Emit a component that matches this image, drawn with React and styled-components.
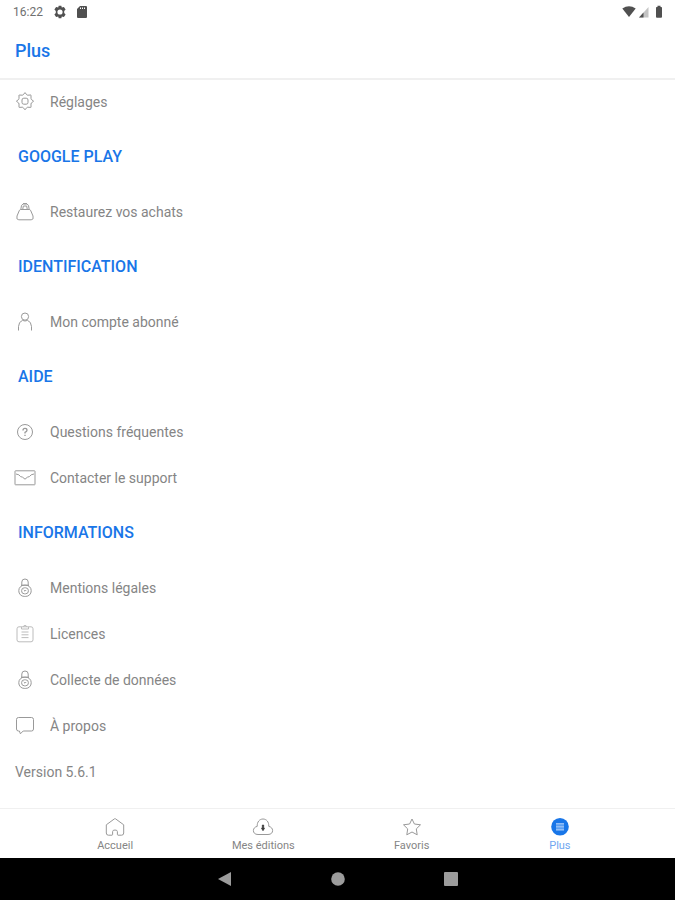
import { useState } from "react";
import styled, { createGlobalStyle } from "styled-components";

const SECTIONS = [
  { rows: [{ icon: "gear", label: "Réglages" }] },
  { title: "GOOGLE PLAY", rows: [{ icon: "bag", label: "Restaurez vos achats" }] },
  { title: "IDENTIFICATION", rows: [{ icon: "user", label: "Mon compte abonné" }] },
  {
    title: "AIDE",
    rows: [
      { icon: "help", label: "Questions fréquentes" },
      { icon: "mail", label: "Contacter le support" },
    ],
  },
  {
    title: "INFORMATIONS",
    rows: [
      { icon: "lock", label: "Mentions légales" },
      { icon: "licence", label: "Licences" },
      { icon: "lock", label: "Collecte de données" },
      { icon: "bubble", label: "À propos" },
    ],
  },
];

const TABS = [
  { icon: "home", label: "Accueil" },
  { icon: "cloud", label: "Mes éditions" },
  { icon: "star", label: "Favoris" },
  { icon: "plus", label: "Plus" },
];

const ICONS = {
  gear: (
    <>
      <path d="M9.2 3.8 L11 1.6 L12.8 3.8 L13.6 4.2 L16.8 4 L17 4.2 L17 7.4 L17.3 8.4 L19.6 10.2 L17.3 12 L17 13 L17 16.2 L16.8 16.4 L13.6 16.2 L12.8 16.6 L11 18.8 L9.2 16.6 L8.4 16.2 L5.2 16.4 L5 16.2 L5 13 L4.7 12 L2.4 10.2 L4.7 8.4 L5 7.4 L5 4.2 L5.2 4 L8.4 4.2 Z" />
      <rect x="8" y="7.2" width="6" height="6" rx="1.8" />
    </>
  ),
  bag: (
    <>
      <path d="M6.6 8.5 H15.4 Q16.2 8.5 16.8 9.8 L19 15 Q20 18.8 17.2 18.8 H4.8 Q2 18.8 3 15 L5.2 9.8 Q5.8 8.5 6.6 8.5 Z" />
      <path d="M6.8 8.5 Q7 3 9.2 3 H12.8 Q15 3 15.2 8.5 M8.8 8 L9.3 5 H12.7 L13.2 8 M9 2.6 H13" />
    </>
  ),
  user: (
    <>
      <circle cx="11" cy="5.6" r="3.6" />
      <path d="M4.5 19.5 V15.5 Q4.8 10.6 8.5 9.4 Q11 10.6 13.5 9.4 Q17.2 10.6 17.5 15.5 V19.5" />
    </>
  ),
  help: (
    <>
      <circle cx="11" cy="11" r="7.5" />
      <path d="M9 9.4 Q9 7.4 11 7.4 T13 9.2 Q13 10.3 11 11.4 V12.6 M11 13.8 V15" strokeWidth="1.3" />
    </>
  ),
  mail: (
    <>
      <rect x="1" y="3.8" width="20" height="14" rx="0.5" />
      <path d="M2 7 L4.8 7.8 L6.6 9.6 L8.6 10.2 L11 12.2 L13.4 10.2 L15.4 9.6 L17.2 7.8 L20 7" />
    </>
  ),
  lock: (
    <>
      <path d="M7.8 9 V5 Q7.8 2 11 2 T14.2 5 V9" />
      <rect x="4.8" y="8.2" width="12.4" height="11.2" rx="5.4" />
      <path d="M7 8.2 H15" />
      <rect x="7.6" y="10.8" width="6.8" height="6" rx="2.8" />
      <path d="M9.8 13 L11 14.2 L12.2 13" />
    </>
  ),
  licence: (
    <>
      <rect x="3" y="3.8" width="16" height="15" rx="2" />
      <path d="M7.5 4 V6 H14.5 V4 M9.5 4 L10 2.6 H12 L12.5 4 M7.5 9 H14.5 M7.5 11.8 H14.5 M7.5 14.6 H14.5" />
    </>
  ),
  bubble: (
    <path d="M4.5 2.5 H17.5 Q19.5 2.5 19.5 4.5 V14 Q19.5 16 17.5 16 H9.2 L6.4 18.8 L5.4 16 H4.5 Q2.5 16 2.5 14 V4.5 Q2.5 2.5 4.5 2.5 Z" />
  ),
  home: (
    <path d="M11.5 2.8 Q11 2.4 10.5 2.8 L2.3 8.8 V17 Q2.3 19.2 4.4 19.2 H8 Q8.6 19.2 8.6 18.4 V15.6 Q8.6 14 11 14 T13.4 15.6 V18.4 Q13.4 19.2 14 19.2 H17.6 Q19.7 19.2 19.7 17 V8.8 Z" />
  ),
  cloud: (
    <>
      <path d="M6 18.5 C2.8 18.5 1.4 16.6 1.4 14.6 C1.4 12.4 3 10.8 5.2 10.4 C5 5.8 7.6 3 11 3 S17 5.8 16.8 10.4 C19 10.8 20.6 12.4 20.6 14.6 C20.6 16.6 19.2 18.5 16 18.5 Z" />
      <path d="M10.3 9 H11.7 V12.2 H12.6 L11 14.8 L9.4 12.2 H10.3 Z" fill="#333" stroke="#333" strokeWidth="0.6" />
    </>
  ),
  star: (
    <path d="M11 3 L13.4 8 L19.5 8.8 L15.3 12.9 L16.2 18.8 L11 16 L5.8 18.8 L6.7 12.9 L2.5 8.8 L8.6 8 Z" />
  ),
  plus: (
    <>
      <circle cx="11" cy="10.8" r="8.8" fill="#1976e8" stroke="none" />
      <rect x="7" y="7" width="8" height="7.6" fill="#5b9ff2" stroke="none" />
      <path d="M7 7.8 H15 M7 10.8 H15 M7 13.8 H15" stroke="#a9cbf8" />
    </>
  ),
};

const Icon = ({ name }) => (
  <IconSvg viewBox="0 0 22 22" $light={name === "licence"} aria-hidden="true">
    {ICONS[name]}
  </IconSvg>
);

const App = () => {
  const [activeTab, setActiveTab] = useState("Plus");

  return (
    <Page>
      <GlobalStyle />
      <StatusBar>
        <StatusGroup>
          <Time>16:22</Time>
          <StatusIcon viewBox="0 0 14 14">
            <path
              d="M5.7 0.8 H8.3 L8.8 2.6 L10.9 2 L12.6 4.6 L11.2 6 V8 L12.6 9.4 L10.9 12 L8.8 11.4 L8.3 13.2 H5.7 L5.2 11.4 L3.1 12 L1.4 9.4 L2.8 8 V6 L1.4 4.6 L3.1 2 L5.2 2.6 Z M7 4.4 A2.6 2.6 0 1 0 7 9.6 A2.6 2.6 0 1 0 7 4.4 Z"
              fillRule="evenodd"
            />
          </StatusIcon>
          <StatusIcon viewBox="0 0 14 14">
            <path
              d="M5 1 H11 Q12 1 12 2 V12 Q12 13 11 13 H3 Q2 13 2 12 V4 Z M5 2.5 V4 H6 V2.5 Z M7 2.5 V4 H8 V2.5 Z M9 2.5 V4 H10 V2.5 Z"
              fillRule="evenodd"
            />
          </StatusIcon>
        </StatusGroup>
        <StatusGroup $tight>
          <StatusIcon viewBox="0 0 14 14">
            <path d="M0.3 3.6 Q7 -1 13.7 3.6 L7 12 Z" />
          </StatusIcon>
          <StatusIcon viewBox="0 0 14 14">
            <path d="M11.5 2 V12.5 H2 Z" fill="#c4c4c4" />
            <path d="M6.5 7.5 V12.5 H2 Z" />
          </StatusIcon>
          <StatusIcon viewBox="0 0 14 14">
            <path d="M5.5 0.8 H8.5 V2 H9.2 Q10 2 10 2.8 V12 Q10 12.8 9 12.8 H5 Q4 12.8 4 12 V2.8 Q4 2 4.8 2 H5.5 Z" />
          </StatusIcon>
        </StatusGroup>
      </StatusBar>

      <Header>
        <Title>Plus</Title>
      </Header>

      <Content>
        {SECTIONS.map(({ title, rows }) => (
          <section key={title || "general"}>
            {title && <SectionTitle>{title}</SectionTitle>}
            {rows.map(({ icon, label }) => (
              <Row key={label} type="button">
                <Icon name={icon} />
                {label}
              </Row>
            ))}
          </section>
        ))}
        <Version>Version 5.6.1</Version>
      </Content>

      <TabBar>
        {TABS.map(({ icon, label }) => (
          <Tab
            key={label}
            type="button"
            $active={label === activeTab}
            onClick={() => setActiveTab(label)}
          >
            <Icon name={icon} />
            {label}
          </Tab>
        ))}
      </TabBar>

      <SystemBar>
        <SystemButton type="button" aria-label="Retour">
          <SystemIcon viewBox="0 0 16 16">
            <path d="M14 1 V15 L1 8 Z" />
          </SystemIcon>
        </SystemButton>
        <SystemButton type="button" aria-label="Accueil du système">
          <SystemIcon viewBox="0 0 16 16">
            <circle cx="8" cy="8" r="6.8" />
          </SystemIcon>
        </SystemButton>
        <SystemButton type="button" aria-label="Applications récentes">
          <SystemIcon viewBox="0 0 16 16">
            <rect x="1" y="1" width="14" height="14" rx="1" />
          </SystemIcon>
        </SystemButton>
      </SystemBar>
    </Page>
  );
};

const GlobalStyle = createGlobalStyle`
  * {
    box-sizing: border-box;
  }
  body {
    margin: 0;
    background: #fff;
    color: #858585;
    font-family: Roboto, sans-serif;
  }
  button {
    border: none;
    padding: 0;
    background: none;
    color: inherit;
    font-family: inherit;
    cursor: pointer;
  }
`;

const Page = styled.div`
  display: flex;
  flex-direction: column;
  min-height: 100vh;
`;

const StatusBar = styled.div`
  display: flex;
  justify-content: space-between;
  align-items: center;
  height: 23px;
  padding: 0 9px 0 13px;
`;
const StatusGroup = styled.div`
  display: flex;
  align-items: center;
  gap: ${({ $tight }) => ($tight ? "1px" : "8px")};
`;
const Time = styled.span`
  min-width: 32px;
  font-size: 12px;
  color: #707070;
`;
const StatusIcon = styled.svg`
  width: 14px;
  height: 14px;
  fill: #505050;
`;

const Header = styled.header`
  display: flex;
  align-items: center;
  height: 55px;
  padding: 0 15px;
  box-shadow: 0 2px #f0f0f0;
`;
const Title = styled.h1`
  margin: 0;
  font-size: 18px;
  font-weight: 500;
  color: #1976e8;
`;

const Content = styled.main`
  flex: 1;
  padding-top: 1px;
`;
const SectionTitle = styled.h2`
  margin: 0;
  padding: 0 18px;
  font-size: 16px;
  line-height: 64px;
  font-weight: 500;
  color: #1976e8;
`;
const Row = styled.button`
  display: flex;
  align-items: center;
  gap: 14px;
  width: 100%;
  height: 46px;
  padding: 0 14px;
  font-size: 14px;
  text-align: left;
`;
const IconSvg = styled.svg`
  width: 22px;
  height: 22px;
  fill: none;
  stroke: ${({ $light }) => ($light ? "#bcbcbc" : "#999")};
  stroke-width: 1;
  stroke-linejoin: round;
`;
const Version = styled.p`
  margin: 0;
  padding: 0 15px;
  font-size: 14px;
  line-height: 46px;
`;

const TabBar = styled.nav`
  display: flex;
  height: 50px;
  padding: 0 41px;
  border-top: 1px solid #f0f0f0;
`;
const Tab = styled.button`
  display: flex;
  flex: 1;
  flex-direction: column;
  align-items: center;
  justify-content: flex-end;
  padding-bottom: 5px;
  font-size: 11px;
  line-height: 15px;
  && {
    color: ${({ $active }) => ($active ? "#6fa6f0" : "#858585")};
  }
`;

const SystemBar = styled.div`
  display: flex;
  justify-content: center;
  height: 42px;
  background: #000;
`;
const SystemButton = styled.button`
  display: flex;
  align-items: center;
  justify-content: center;
  width: 113px;
`;
const SystemIcon = styled.svg`
  width: 16px;
  height: 16px;
  fill: #9c9c9c;
`;

export default App;
